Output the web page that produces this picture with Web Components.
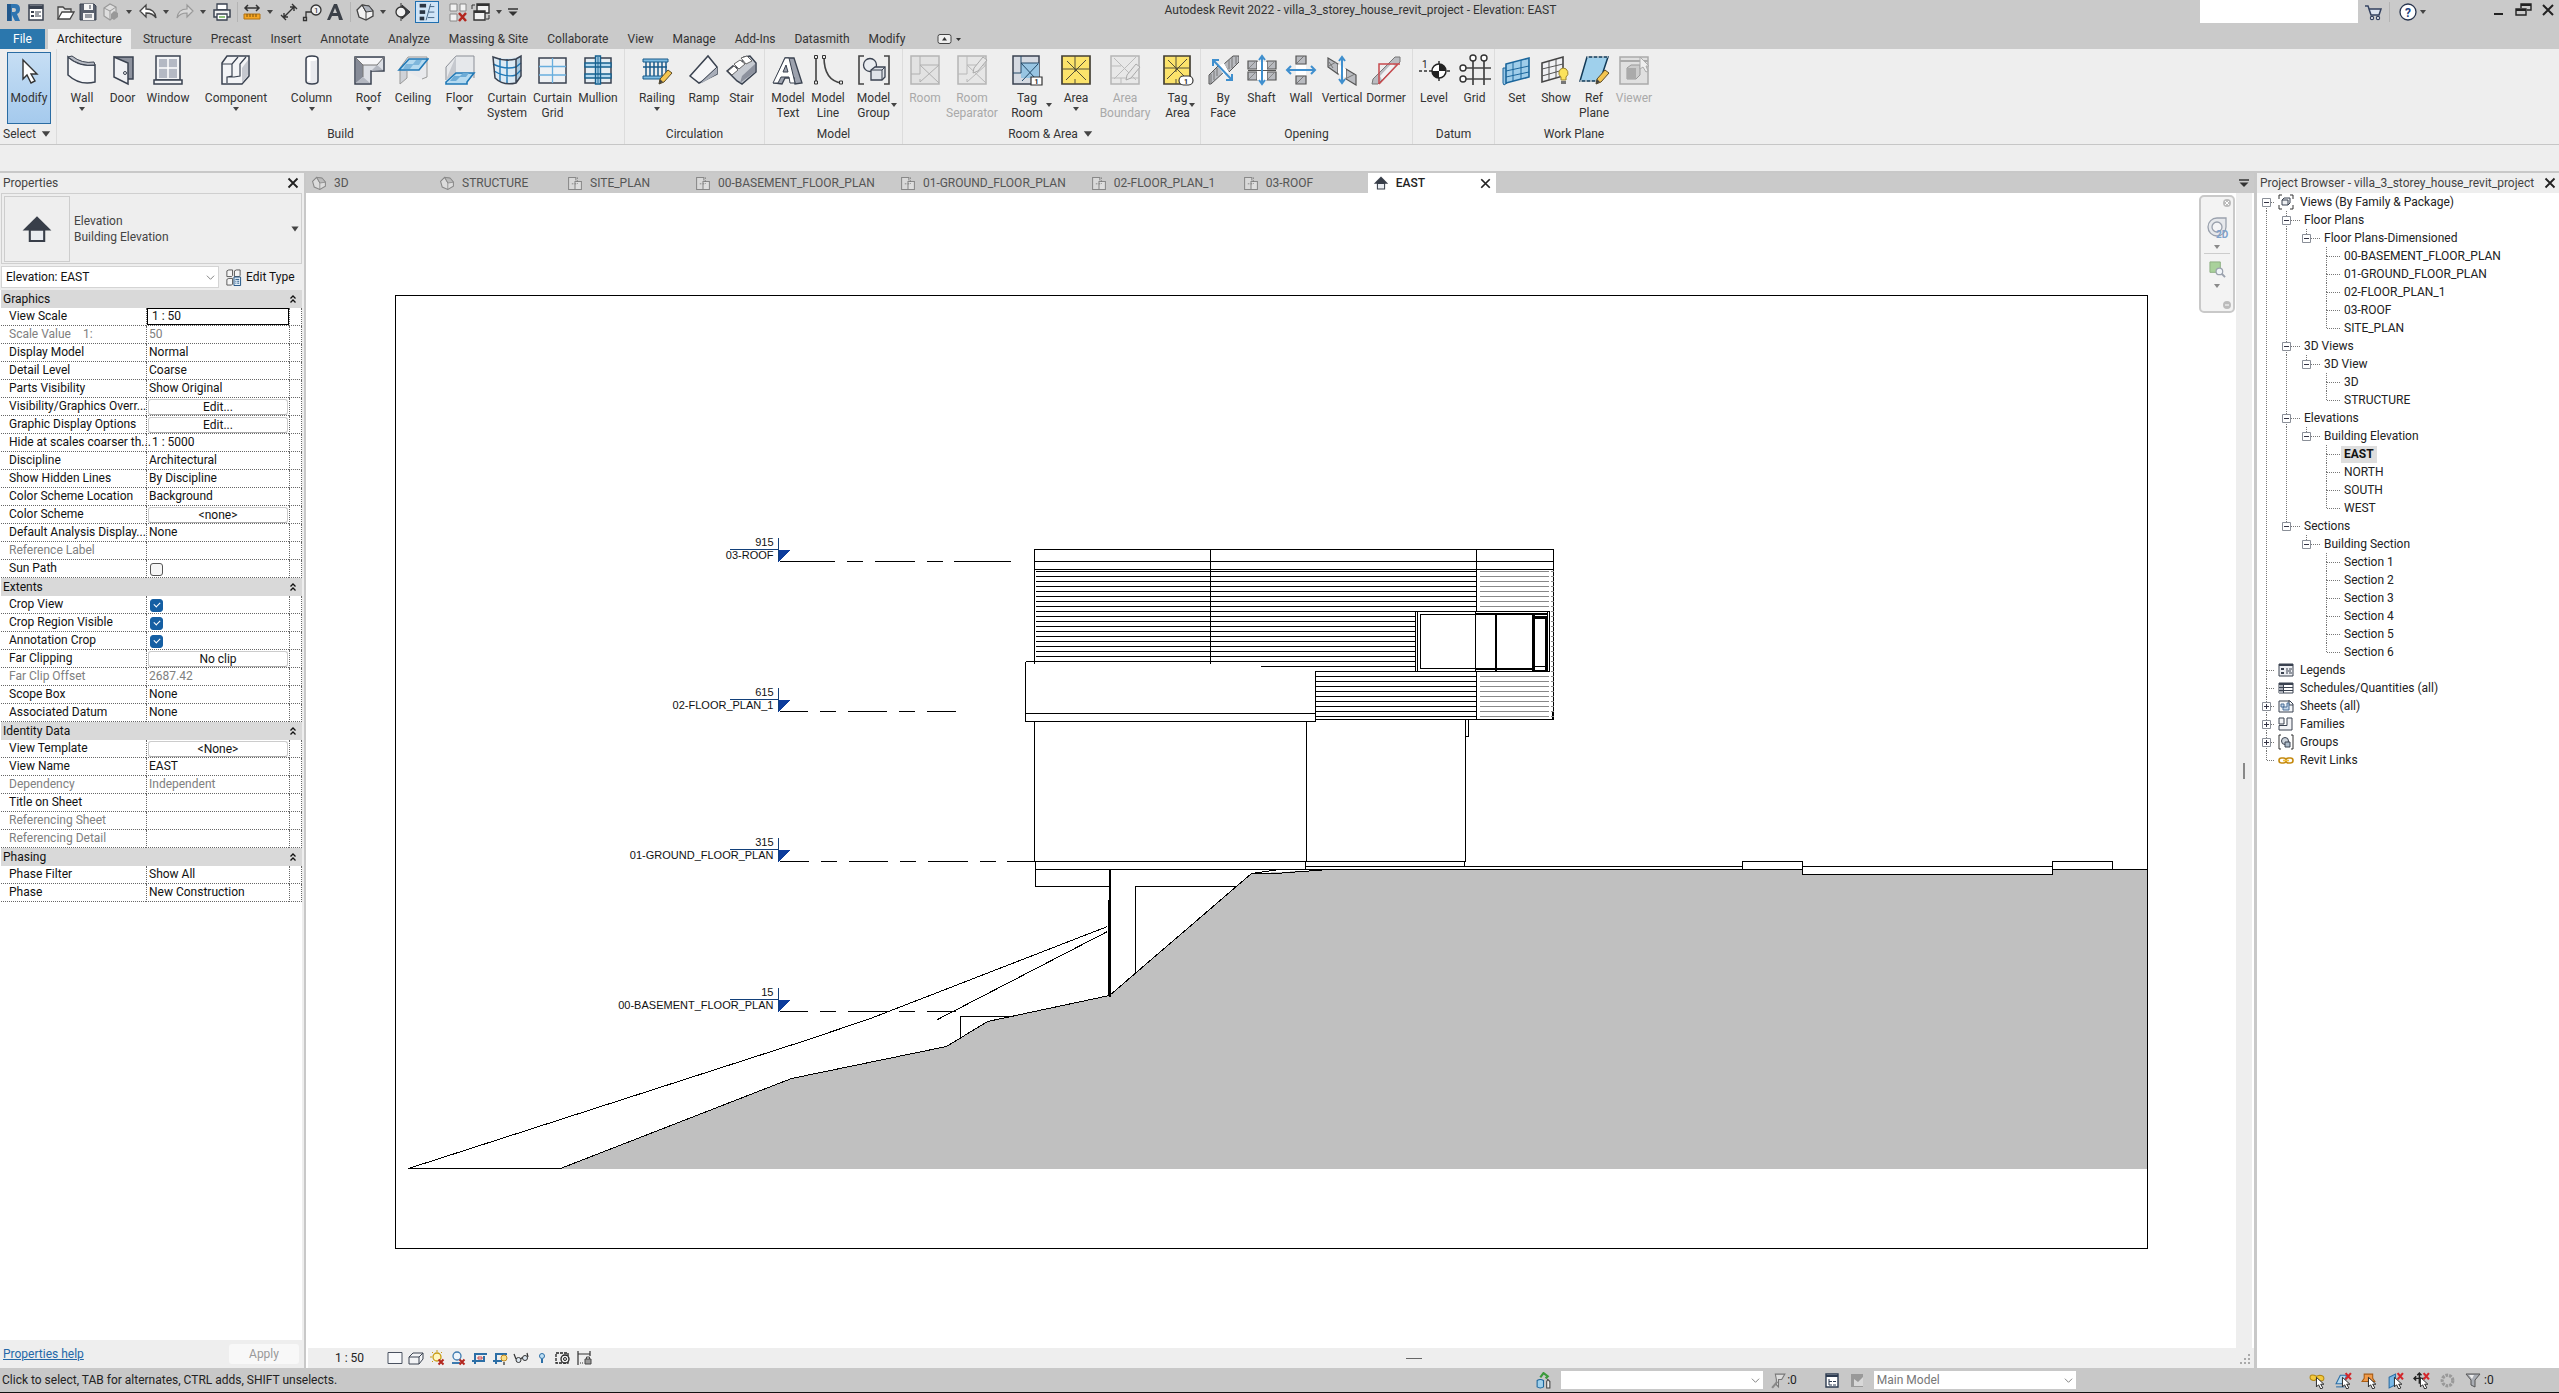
<!DOCTYPE html>
<html lang="en">
<head>
<meta charset="utf-8">
<title>Autodesk Revit 2022 - villa_3_storey_house_revit_project - Elevation: EAST</title>
<style>
  html, body { margin: 0; height: 100%; }
  body { font: 12px/16px Roboto, "Open Sans", sans-serif; color: #333; background: #eee; overflow: hidden; }
</style>
</head>
<body>
<rv-app></rv-app>
<script>
/* ---------- icon set ---------- */
const D = '#3a4250', L = '#e4e6ea', M = '#b9bdc6', B = '#1f78b6', LB = '#b5daf0';
const big = s => ['0 0 32 32', s];
const sm = s => ['0 0 20 20', s];
const mini = s => ['0 0 16 16', s];
const pencil = '<path d="M18 30l1-5 8-9 4 3-8 9z" fill="#f4c550" stroke="#5b4a25"/><path d="M18 30l1-5 3 3z" fill="#444"/>';
const greyPencil = '<path d="M17 19l1-5 9-11 4 3-9 11z" fill="#e6e6e6" stroke="#aaa"/>';
const cursor = '<path d="M7 5v9l2-2 2 4 2-1-2-3.500h3z" fill="#fff" stroke="#222" stroke-width=".9"/>';
const redx = '<path d="M9.500 9.500l5 5m0-5l-5 5" stroke="#b3261e" stroke-width="2"/>';
const rx2 = '<path d="M10 1l5 6m0-6l-5 6" stroke="#d3262b" stroke-width="2"/>';
const ICONS = {
  cursor: big('<path d="M10 6v19l4-4 4 8 4-2-4-7h6z" fill="#fff" stroke="#333" stroke-width="1.400"/>'),
  wall: big(`<path d="M2 3q11 10 27 8v17q-15 4-27-7z" fill="#f4f5f7" stroke="${D}" stroke-width="1.500"/><path d="M2 3l4-1q10 8 22 6l1 3Q14 13 2 3z" fill="${M}" stroke="${D}"/>`),
  door: big(`<path d="M7 3h19v22h-5" fill="#8d929e" stroke="${D}" stroke-width="1.500"/><path d="M7 3l14 6v21L7 23z" fill="#f0f1f4" stroke="${D}" stroke-width="1.500"/><circle cx="18" cy="19" r="1.500" fill="none" stroke="${D}"/>`),
  window: big(`<path d="M4 2h24v24H4z" fill="#f3f4f6" stroke="${D}" stroke-width="1.500"/><path d="M7 5h18v19H7z" fill="#b4b9c4"/><path d="M16 5v19M7 14h18" stroke="#fff" stroke-width="1.500"/><path d="M2 26h28v4H2z" fill="#f3f4f6" stroke="${D}" stroke-width="1.500"/>`),
  component: big(`<path d="M2 9l5-7h22v20l-7 8H2z" fill="#f3f4f6" stroke="${D}" stroke-width="1.500"/><path d="M22 29V14l6-8v15z" fill="#c5c8cf"/><path d="M18 3l-6 7v12l-5 1M26 3l-6 7v12l-6 1H7v6M2 10h10" fill="none" stroke="${D}" stroke-width="1.200"/>`),
  column: big(`<path d="M10 5q0-3 6-3t6 3v22q0 3-6 3t-6-3z" fill="#e9eaee" stroke="${D}" stroke-width="1.500"/><path d="M13 6v21" stroke="#fff" stroke-width="3"/><ellipse cx="16" cy="5" rx="5" ry="2" fill="#fff"/>`),
  roof: big(`<path d="M2 3h29v14H18v13H2z" fill="#dcdfe5" stroke="${D}" stroke-width="1.500"/><path d="M3 4l7 7v12L3 29z" fill="#868b97"/><path d="M10 11h14l6-7H3z" fill="#f6f6f8"/><path d="M3 29l7-6 7 6zM30 16l-6-5-6 6" fill="#b3b7c0"/><path d="M2 3l8 8h14l7-8M10 11v12" fill="none" stroke="#777"/>`),
  ceiling: big(`<path d="M3 14L11 3h19v20l-5 2" fill="#e8e9ec" stroke="#999"/><path d="M3 14v16l7-6V17" fill="#cfd2d7" stroke="#999"/><path d="M2 16L12 5h19l-9 11z" fill="${LB}" stroke="${B}" stroke-width="1.600"/><path d="M9 10h7l3-4h6l-3 5h-6l-3 4H6z" fill="#7fb7dc"/>`),
  floor: big(`<path d="M2 26V13L12 2h18v22" fill="#e6e8eb" stroke="#8b8f97"/><path d="M12 2v17L2 26z" fill="#c6c9cf"/><path d="M2 28l10-9h18l-7 9v2H2z" fill="${LB}" stroke="${B}" stroke-width="1.600"/><path d="M10 22h6l3-3h6l-3 4h-6l-4 4H6z" fill="#6cabd6"/>`),
  curtainsystem: big(`<path d="M2 3q12 3 28-1v20l-5 7Q12 32 4 24z" fill="#dceaf4"/><path d="M25 5l5-3v20l-5 7z" fill="#93bad6" opacity=".7"/><path d="M2 10q12 6 23 3l5-4M3 17q12 7 22 4l5-5M9 4v23M16 5v25" fill="none" stroke="${B}" stroke-width="1.400"/><path d="M2 3q12 5 23 2l5-3v20l-5 7Q12 32 4 24zM25 5v24" stroke="${D}" stroke-width="1.500" fill="none"/>`),
  curtaingrid: big(`<path d="M2 4h27v25H2z" fill="#eef1f4" stroke="${D}" stroke-width="1.500"/><path d="M15.500 4v25M2 12.500h27M2 21h27" stroke="#68aede" stroke-width="1.300"/>`),
  mullion: big(`<path d="M3 4h26v25H3z" fill="#e6edf2" stroke="${D}" stroke-width="1.500"/><path d="M3 9h26v4H3zM3 20h26v4H3zM13.500 2h5v28h-5z" fill="${LB}" stroke="#15608f" stroke-width="1.400"/><path d="M16 3v26" stroke="#15608f"/>`),
  railing: big(`<path d="M2 5h25v3H2zM2 22h21v3H2z" fill="#7cbbe2" stroke="#185a8a"/><path d="M5 8v14M9 8v14M13 8v14M17 8v14M21 8v14M25 8v12M2 13h24" stroke="#185a8a" stroke-width="1.500"/>${pencil}`),
  ramp: big(`<path d="M2 22L20 2l9 11v7L11 29z" fill="#f5f5f7" stroke="${D}" stroke-width="1.500"/><path d="M12 28l17-15v7L14 29z" fill="#a9aeb9"/><path d="M12 29L29 13" stroke="${D}"/>`),
  stair: big(`<path d="M1 17l6-5 4 2 1-6 5-1 1-4 6-1 6 7v9L16 30l-5-3z" fill="#c6cad1" stroke="${D}" stroke-width="1.500"/><path d="M2 17l6-5 4 4-6 5zM8 10l6-4 5 4-6 5zM15 4l6-2 5 5-6 3z" fill="#fff" stroke="#666"/><path d="M14 29l15-11v-8L16 22z" fill="#8d929e"/>`),
  modeltext: big(`<path d="M2 29L13 4h9l8 25-7 1-1-6h-9l-3 6z" fill="#9da2ae" stroke="${D}" stroke-width="1.300"/><path d="M1 29L13 4h4l6 25h-5l-1-6H9l-3 6zM11 18h5l-2-7z" fill="#fff" stroke="${D}" fill-rule="evenodd"/>`),
  modelline: big(`<path d="M4 3v26M12 3q0 24 18 26" fill="none" stroke="#444" stroke-width="1.600"/><path d="M2.500 1.500h3v3h-3zM2.500 27h3v3h-3zM10.500 1.500h3v3h-3zM27.500 27h3v3h-3z" fill="#eee" stroke="#333"/>`),
  modelgroup: big(`<path d="M6 2H1v28h5M26 2h5v28h-5" fill="none" stroke="#444" stroke-width="1.600"/><circle cx="12" cy="11" r="6.500" fill="#e9ecf0" stroke="${D}" stroke-width="1.300"/><path d="M13 16l4-3h10v10l-3 3H13z" fill="#dfe3e9" stroke="${D}" stroke-width="1.300"/><path d="M13 16h11v10M24 16l3-3" fill="none" stroke="${D}"/>`),
  room: big('<path d="M2 2h28v28H2z" fill="#e2e2e2" stroke="#b5b5b5" stroke-width="1.500"/><path d="M11 2v18H2M11 11h19M11 28V25M11 11l19 18M30 11L11 28" fill="none" stroke="#b0b0b0"/>'),
  roomsep: big(`<path d="M2 2h28v28H2z" fill="#e6e6e6" stroke="#b5b5b5" stroke-width="1.500"/><path d="M11 2v18H2M11 11h19M11 28V25M11 11l19 18M30 11L11 28" fill="none" stroke="#b8b8b8"/>${greyPencil}`),
  tagroom: big(`<path d="M2 2h26v28H2z" fill="#d5dae2" stroke="${D}" stroke-width="1.500"/><path d="M10 9h18v15H10z" fill="#98c5e2"/><path d="M10 2v17H2M10 9h18M10 9l14 15M27 10L11 27" fill="none" stroke="#244a68"/><path d="M20 23h11v8H20z" fill="#fff" stroke="#333" stroke-width="1.200"/><text x="23.500" y="29.500" font-size="7" font-weight="700" fill="#222">1</text>`),
  area: big('<path d="M2 2h28v28H2z" fill="#fce36b" stroke="#454136" stroke-width="1.700"/><path d="M7 7l19 19M26 6L6 26M15 2v16M2 15h28M15 25v5" stroke="#55503a" fill="none"/>'),
  areabound: big(`<path d="M2 2h28v28H2z" fill="#e8e8e8" stroke="#b5b5b5" stroke-width="1.500"/><path d="M5 4l22 22M27 3L5 25M2 12h10M2 24h28M12 24v6" stroke="#bbb" fill="none"/><g transform="translate(0 7)">${greyPencil}</g>`),
  tagarea: big('<path d="M2 2h26v28H2z" fill="#fce36b" stroke="#454136" stroke-width="1.700"/><path d="M6 6l18 18M25 5L5 25M14 2v16M2 14h26M14 25v5" stroke="#55503a" fill="none"/><rect x="17" y="22" width="14" height="9" rx="4.500" fill="#fff" stroke="#333" stroke-width="1.200"/><text x="22" y="29.500" font-size="7" font-weight="700" fill="#222">1</text>'),
  byface: big('<path d="M2 30V21l9-9 6 6L4 30zM17 10l9-8h6v6L22 18z" fill="#b9bbc0" stroke="#555"/><path d="M4 29V20M7 26V17M10 22v-8M22 15V6M25 14V3M29 10V3" stroke="#777"/><path d="M11 12l6-3 5 9-5 3z" fill="#fff"/><path d="M6 6l19 20M6 12V6h6M25 20v6h-6" fill="none" stroke="#3f8fce" stroke-width="2"/>'),
  shaft: big('<g fill="#b9bbc0" stroke="#555" stroke-width="1.200"><path d="M2 7h9v8H2zM21 7h9v8h-9zM2 18h9v8H2zM21 18h9v8h-9z"/></g><path d="M3 14l6-6M22 14l6-6M3 25l6-6M22 25l6-6" stroke="#888"/><path d="M11 8h10v18H11z" fill="#fff"/><path d="M2 16.500h28" stroke="#555"/><path d="M16 2v28M13 6l3-4 3 4M13 26l3 4 3-4" fill="none" stroke="#3f8fce" stroke-width="2"/>'),
  wallopen: big('<path d="M11 2h10v8H11zM11 22h10v8H11z" fill="#b9bbc0" stroke="#555" stroke-width="1.200"/><path d="M12 9l7-7M12 29l7-7" stroke="#777"/><path d="M11 11h10v10H11z" fill="#fff"/><path d="M2 16h28M6 12l-4 4 4 4M26 12l4 4-4 4" fill="none" stroke="#3f8fce" stroke-width="2"/>'),
  vertical: big('<path d="M2 4l10 6v10L2 13zM20 15l10 6v10l-10-6z" fill="#b9bbc0" stroke="#555" stroke-width="1.200"/><path d="M3 12l7-4M21 24l8-4M3 8l4 6" stroke="#777"/><path d="M12 10l8 5v9l-8-5z" fill="#fff"/><path d="M16 3v26M13 7l3-4 3 4M13 25l3 4 3-4" fill="none" stroke="#3f8fce" stroke-width="2"/>'),
  dormer: big('<path d="M3 25L25 3h5v5L8 30H2z" fill="#b9bbc0" stroke="#777"/><path d="M10 22l12-13 3 3-13 14z" fill="#fff" opacity=".8"/><path d="M9 30V10h21M9 30L28 10" fill="none" stroke="#c74a4e" stroke-width="1.500"/>'),
  level: big('<path d="M1 17h3m2 0h3m2 0h4M29 17h3M21 7v20" stroke="#333" stroke-width="1.500"/><circle cx="21" cy="17" r="7" fill="#fff" stroke="#222" stroke-width="1.500"/><path d="M21 17v-7a7 7 0 0 1 7 7zM21 17v7a7 7 0 0 1-7-7z" fill="#222"/><text x="4" y="14" font-size="10" fill="#222">1</text>'),
  grid: big('<path d="M14 7v24M25 7v24M6 14h26M6 25h26" stroke="#444" stroke-width="1.700"/><g fill="#fff" stroke="#333" stroke-width="1.400"><circle cx="14" cy="4" r="3"/><circle cx="25" cy="4" r="3"/><circle cx="4" cy="14" r="3"/><circle cx="4" cy="25" r="3"/></g>'),
  set: big('<path d="M2 14h4v15l-3 2-1-2z" fill="#9ac7e6" stroke="#1b669c"/><path d="M5 10l23-6v19L5 29z" fill="#9fcdea" stroke="#1b669c" stroke-width="1.600"/><path d="M12 8v19M20 6v19M5 17l23-5M5 23l23-5" stroke="#1b669c"/>'),
  show: big('<path d="M2 9l21-6v19L2 28z" fill="#f0f1f4" stroke="#444" stroke-width="1.600"/><path d="M9 7v19M16 5v19M2 15l21-5M2 22l21-6" stroke="#555"/><path d="M23 14a5 5 0 0 1 3 9v3h-5v-3a5 5 0 0 1 2-9z" fill="#fbe25b" stroke="#9a8332"/><path d="M21 27h5v3h-5z" fill="#777"/>'),
  refplane: big(`<path d="M9 3h21L22 27H2z" fill="#9fd0ec" stroke="#123a57" stroke-width="1.500"/><path d="M9 3h21M2 27h20" stroke="#fff" stroke-dasharray="2 3"/>${pencil}`),
  viewer: big('<path d="M2 3h28v27H2z" fill="#e0e0e0" stroke="#aaa" stroke-width="1.500"/><path d="M2 7h28" stroke="#aaa" stroke-width="2"/><path d="M9 14l4-3h9v10l-4 4H9z" fill="#ccc" stroke="#999"/><path d="M9 14h9v11H9z" fill="#aaa"/><path d="M22 3v12l3-2 3 5 2-1-2-5h3z" fill="#eee" stroke="#aaa"/>'),
  /* quick access */
  logo: sm('<path d="M4 2h8q5 0 5 5 0 4-3 5l3 7h-5l-3-6v6H4z" fill="#2f74b0"/><path d="M9 6h2q2 0 2 2t-2 2H9z" fill="#cacaca"/><path d="M4 2h4v17H4z" fill="#22588c"/>'),
  props: sm(`<path d="M3 3h14v15H3z" fill="#fff" stroke="${D}" stroke-width="1.500"/><path d="M3 4h14v3H3z" fill="${D}"/><path d="M5 9h3v2H5zM5 13h3v2H5z" fill="${D}"/><path d="M9 10h6M9 14h6M9 12h4" stroke="${D}"/>`),
  open: sm('<path d="M3 17V5h5l2 2h6v3" fill="#ededed" stroke="#444" stroke-width="1.300"/><path d="M3 17l4-7h12l-4 7z" fill="#fff" stroke="#444" stroke-width="1.300"/>'),
  save: sm(`<path d="M2 2h14l2 2v14H2z" fill="#59606d" stroke="${D}"/><path d="M6 2h9v6H6zM5 11h11v7H5z" fill="#f5f5f5"/><path d="M12 3v4M7 13h7M7 15h7" stroke="${D}"/>`),
  sync: sm('<path d="M3 6l6-4 6 3v8l-6 5-6-4z" fill="#dedede" stroke="#999" stroke-width="1.200"/><path d="M3 6l6 3v9M9 9l6-4" fill="none" stroke="#999"/><path d="M13 9l4 2v4l-4 3-3-2v-4z" fill="#999"/>'),
  undo: sm('<path d="M8 3v4q9 0 10 9-3-5-10-5v4L2 9z" fill="#fff" stroke="#444" stroke-width="1.300"/>'),
  redo: sm('<path d="M12 3v4Q3 7 2 16q3-5 10-5v4l6-6z" fill="#d8d8d8" stroke="#999" stroke-width="1.200"/>'),
  print: sm(`<path d="M5 2h10v6H5z" fill="#fff" stroke="${D}" stroke-width="1.300"/><path d="M2 8h16v7H2z" fill="#f0f0f0" stroke="${D}" stroke-width="1.500"/><path d="M5 12h10v6H5z" fill="#fff" stroke="${D}" stroke-width="1.300"/><path d="M7 14h6v2H7z" fill="#8fc27c"/>`),
  measure: sm('<path d="M3 6h14M6 3L3 6l3 3M14 3l3 3-3 3" fill="none" stroke="#333" stroke-width="1.500"/><path d="M2 12h16v5H2z" fill="#f5a623" stroke="#b27312"/><path d="M5 12v3M8 12v3M11 12v3M14 12v3" stroke="#7b4f0c"/>'),
  aligned: sm('<path d="M5 15L15 5M5 11v4h4M11 5h4v4M2 13l5 5M13 2l5 5" fill="none" stroke="#333" stroke-width="1.400"/>'),
  tag: sm('<path d="M1.500 15.500h3v3h-3zM4 15v-5h6" fill="none" stroke="#333" stroke-width="1.300"/><circle cx="14" cy="8" r="5" fill="#eee" stroke="#333" stroke-width="1.300"/><text x="12" y="11" font-size="8" fill="#222">1</text>'),
  bigA: sm('<path d="M2 18L9 2h3l6 16h-4l-1-4H7l-2 4zM8 11h4l-2-5z" fill="#3b4048" fill-rule="evenodd"/>'),
  house3d: sm('<path d="M2 8l5-5 7 1 4 5v5l-7 4-7-3z" fill="#f2f2f2" stroke="#444" stroke-width="1.300"/><path d="M7 3l7 1 4 5-7 1z" fill="#aeb3bc" stroke="#444"/><path d="M2 8l5-5 4 7v8" fill="none" stroke="#444"/>'),
  houseg: sm('<path d="M2 8l5-5 7 1 4 5v5l-7 4-7-3z" fill="#dcdcdc" stroke="#888" stroke-width="1.300"/><path d="M7 3l7 1 4 5-7 1z" fill="#bbb" stroke="#888"/><path d="M2 8l5-5 4 7v8" fill="none" stroke="#888"/>'),
  section: sm('<path d="M10 3l8 7-8 7z" fill="#3a3f48" stroke="#333"/><circle cx="9" cy="10" r="5" fill="#f2f2f2" stroke="#333" stroke-width="1.300"/><path d="M9 1v4M9 15v4" stroke="#333"/>'),
  thin: ['0 0 24 22', '<path d="M4 4h7" stroke="#2b3644" stroke-width="4"/><path d="M4 11h6" stroke="#2b3644" stroke-width="4"/><path d="M4 18h5" stroke="#2b3644" stroke-width="4"/><path d="M15 5h5M14 11h6M13 17h7" stroke="#3d5f80"/><path d="M16 2l-5 18" stroke="#3d5f80"/>'],
  closehid: sm('<path d="M2 2h7v7H2zM12 2h6v7h-6zM2 12h7v7H2z" fill="#f2f2f2" stroke="#888"/><path d="M11 11l7 8m0-8l-7 8" stroke="#b3261e" stroke-width="2.500"/>'),
  switchw: sm('<path d="M6 2h12v9H6z" fill="#f2f2f2" stroke="#333" stroke-width="1.400"/><path d="M3 9h11v9H3z" fill="#f2f2f2" stroke="#333" stroke-width="1.400"/><path d="M3 10h11M6 3h12" stroke="#333" stroke-width="2"/><path d="M1 7V3h3M18 13v4h-3" fill="none" stroke="#333"/>'),
  down: ['0 0 10 10', '<path d="M2 3h6L5 7z" fill="#444"/>'],
  menu: ['0 0 10 10', '<path d="M0 2h10" stroke="#333" stroke-width="1.500"/><path d="M0.500 4.500h9L5 9z" fill="#333"/>'],
  cart: sm('<path d="M2 4h3l3 9h8l2-6H6" fill="#dce3ee" stroke="#33415f" stroke-width="1.500"/><circle cx="9" cy="16" r="1.600" fill="#fff" stroke="#33415f" stroke-width="1.200"/><circle cx="15" cy="16" r="1.600" fill="#fff" stroke="#33415f" stroke-width="1.200"/>'),
  help: sm('<circle cx="10" cy="10" r="8" fill="#fff" stroke="#26334d" stroke-width="1.300"/><text x="7" y="14.500" font-size="12" font-weight="700" fill="#1d3f7f">?</text>'),
  min: sm('<path d="M6 14h9" stroke="#222" stroke-width="2"/>'),
  restore: sm('<path d="M8 8V4h10v6h-4" fill="none" stroke="#222" stroke-width="1.400"/><path d="M8 5h10" stroke="#222" stroke-width="2"/><path d="M3 9h10v6H3z" fill="none" stroke="#222" stroke-width="1.400"/><path d="M3 10h10" stroke="#222" stroke-width="2"/>'),
  close: sm('<path d="M5 5l10 10M15 5L5 15" stroke="#222" stroke-width="2"/>'),
  toggle: ['0 0 24 12', '<rect x="1" y="1.500" width="13" height="9" rx="2" fill="#eee" stroke="#444"/><path d="M5 7.500h5L7.500 4z" fill="#333"/><path d="M19 5h5l-2.500 3z" fill="#333"/>'],
  planTab: sm('<path d="M12 18H2V3h9v4" fill="#d9d9d9" stroke="#888" stroke-width="1.300"/><path d="M10 8h8v10h-8z" fill="#dedede" stroke="#888" stroke-width="1.300"/><path d="M6 11h7M13 3v8" stroke="#777" stroke-dasharray="2 1.500"/>'),
  elev: sm('<path d="M10 2l9 9H1z" fill="#383e49"/><path d="M5.500 10.500h9v7h-9z" fill="#e9ecf1" stroke="#383e49" stroke-width="1.300"/>'),
  edittype: ['0 0 18 18', `<path d="M2 2l2-1h4v6l-1 1H2zM10 2l2-1h4v6l-1 1h-5zM2 11l2-1h4v6l-1 1H2z" fill="#f4f4f4" stroke="#555"/><path d="M9.500 8.500h7v9h-7z" fill="#e4f0fa" stroke="#1c4f80"/><path d="M11 11h4M11 13h1m1 0h2M11 15h1m1 0h2" stroke="#1c4f80"/>`],
  collapse: ['0 0 8 10', '<path d="M1.500 4.500L4 2l2.500 2.500M1.500 8.500L4 6l2.500 2.500" fill="none" stroke="#111" stroke-width="1.300"/>'],
  chev: ['0 0 10 10', '<path d="M1 3l4 4 4-4" fill="none" stroke="#777"/>'],
  /* browser tree */
  views: mini(`<path d="M4 1H1v4M12 1h3v4M4 15H1v-4M12 15h3v-4" fill="none" stroke="#333"/><path d="M4 6l2-2h6v5l-2 2H4zM4 6h6v5" fill="#eef0f3" stroke="${D}"/>`),
  legends: mini(`<path d="M1 2h14v12H1z" fill="#eceef2" stroke="${D}"/><path d="M1 2h14v2H1z" fill="${D}"/><path d="M3 6h3v2H3zM3 10h3v2H3z" fill="${D}"/><path d="M8 7h2m1 0h3M8 9h5M8 11h2m1 0h3" stroke="${D}"/>`),
  schedules: mini(`<path d="M1 3h14v10H1z" fill="#fff" stroke="${D}"/><path d="M1 4h14" stroke="${D}" stroke-width="2"/><path d="M1 5h4v8H1z" fill="#a9adb6"/><path d="M1 7.500h14M1 10.500h14M5.500 4v9" stroke="${D}"/>`),
  sheets: mini(`<path d="M1 3h11l3 3v8H1z" fill="#f4f6f9" stroke="${D}"/><path d="M11 2v5h4" fill="none" stroke="${D}"/><path d="M3 6h3v3H3zM5 9h4V5h2v7H5z" fill="#c4d6ea" stroke="#4a6f98"/>`),
  families: mini(`<path d="M1 2h5v6H1zM1 9.500h8V2h5v12H1z" fill="#f1f2f5" stroke="${D}"/>`),
  groups: mini(`<path d="M3 1H1v14h2M13 1h2v14h-2" fill="none" stroke="#333"/><circle cx="7" cy="7" r="3.500" fill="#cdd4dc" stroke="${D}"/><path d="M7 8h5v5H7z" fill="#aebdcb" stroke="${D}"/>`),
  links: mini('<g fill="none" stroke="#c58a10" stroke-width="1.600"><rect x="1" y="6" width="7" height="5" rx="2.500"/><rect x="8" y="6" width="7" height="5" rx="2.500"/></g><path d="M5 8.500h6" stroke="#f0bf3d" stroke-width="1.600"/>'),
  /* view control bar */
  detail: mini('<path d="M1 2.500h14v11H1z" fill="#f7f8fa" stroke="#4a5260"/>'),
  style: mini('<path d="M1 7l4-4h10v6l-4 5H1zM1 7h10v7M11 7l4-4" fill="#f2f3f5" stroke="#3a4250"/>'),
  sun: mini(`<circle cx="8" cy="7" r="4" fill="#fff6bf" stroke="#c89b14" stroke-width="1.300"/><path d="M8 0v2M1 7h2M3 2l1 1M13 2l-1 1M3 12l1-1" stroke="#c89b14"/>${redx}`),
  shadow: mini(`<circle cx="7" cy="6" r="4" fill="#eef5fb" stroke="#3e7bb0" stroke-width="1.300"/><path d="M2 13h8" stroke="#3e7bb0" stroke-width="2"/>${redx}`),
  crop: mini('<path d="M1 11h12V6M4 14V4h12" fill="none" stroke="#2b6ea6" stroke-width="2"/><path d="M7 7h4v2H7z" fill="none" stroke="#c44"/>'),
  cropvis: mini('<path d="M1 11h9M4 14V4h11" fill="none" stroke="#2b6ea6" stroke-width="2"/><circle cx="12" cy="8" r="3" fill="#fbe08a" stroke="#c08a20"/><path d="M11 12h2v3h-2z" fill="#777"/>'),
  glasses: mini('<path d="M1 4l2 5M14 3l1 4M8 9q1-2 2-1" fill="none" stroke="#333" stroke-width="1.200"/><circle cx="5.500" cy="10" r="2.500" fill="#dbe6ef" stroke="#333"/><circle cx="12" cy="8" r="2.500" fill="#dbe6ef" stroke="#333"/>'),
  bulb: mini('<circle cx="8" cy="6" r="2.500" fill="#bfe0f5" stroke="#2b6ea6"/><path d="M7 9h2v4H7z" fill="#2b6ea6"/>'),
  tempview: mini('<path d="M1 3h12v10H1z" fill="none" stroke="#222" stroke-width="1.300" stroke-dasharray="3 1"/><circle cx="10" cy="9" r="4" fill="#f0f0f0" stroke="#222" stroke-width="1.300"/><circle cx="10" cy="9" r="1.500" fill="none" stroke="#222"/>'),
  constraints: mini('<path d="M2 1v14M14 1v5M2 4h12" fill="none" stroke="#333" stroke-width="1.200"/><path d="M4 13h4" stroke="#333" stroke-dasharray="1 1"/><path d="M9 9h6v5H9z" fill="#999" stroke="#444"/><path d="M10.500 9V7h3v2" fill="none" stroke="#444"/>'),
  grip: mini('<path d="M12 4h2v2h-2zM8 8h2v2H8zM12 8h2v2h-2zM4 12h2v2H4zM8 12h2v2H8zM12 12h2v2h-2z" fill="#aaa"/>'),
  /* status bar */
  worksets: mini('<path d="M2 8q3-2 6 0v6q-3 2-6 0z" fill="#9fd0ec" stroke="#1b669c"/><path d="M5 5l3-4 4 3-2 2" fill="none" stroke="#3a9a3a" stroke-width="2"/><path d="M12 7l2 2v6h-3V9z" fill="#eee" stroke="#444"/>'),
  editable: mini('<path d="M5 2h9l-3 5H8v7l-2-2V7z" fill="#ddd" stroke="#777"/><path d="M2 15l5-6" stroke="#888" stroke-width="2"/>'),
  options: mini('<path d="M2 2h12v13H2z" fill="#fff" stroke="#2d3b50" stroke-width="1.400"/><path d="M2 3h12v2H2z" fill="#2d3b50"/><path d="M5 7v6h3M5 9.500h3M9 9.500h3M9 13h3" stroke="#2d3b50" fill="none"/>'),
  addset: mini('<path d="M2 2h12v13H2z" fill="#999"/><path d="M5 14V7l4 3 5-5v9" fill="#d8d8d8"/>'),
  sellink: mini(`<path d="M1 5q0-3 4-2l2 1 3-1q4 0 4 3t-4 2L7 7 5 8Q1 8 1 5z" fill="#f3c93c" stroke="#b48812"/>${cursor}`),
  selunder: mini(`<path d="M1 11l4-8h6l-3 8z" fill="#b5daf0" stroke="#2b6ea6"/><path d="M1 14h8" stroke="#2b6ea6"/>${rx2}${cursor}`),
  selpin: mini(`<path d="M3 2h8v4l2 3H1l2-3z" fill="#f29b49" stroke="#a85b12"/>${cursor}`),
  selface: mini(`<path d="M2 5l6-3v10l-6 3z" fill="#79b8e6" stroke="#2b6ea6"/>${rx2}${cursor}`),
  seldrag: mini(`<path d="M6 1v10M1 6h10M4 3l2-2 2 2M3 4L1 6l2 2" fill="none" stroke="#222" stroke-width="1.400"/>${rx2}${cursor}`),
  ring: mini('<circle cx="8" cy="8" r="5" fill="none" stroke="#999" stroke-width="3" stroke-dasharray="2.500 1"/>'),
  filter: mini('<path d="M1 2h14l-5 6v7l-4-2V8z" fill="#a9adb4" stroke="#555"/><path d="M4 3h5L7 7z" fill="#eee"/>'),
  /* navigation bar */
  wheel: ['0 0 24 24', '<path d="M3 12a9 9 0 0 1 9-9h9v9a9 9 0 0 1-9 9 9 9 0 0 1-9-9z" fill="#e6e8ec" stroke="#9aa1ad" stroke-width="1.300"/><circle cx="12" cy="12" r="5" fill="#f4f4f6" stroke="#9aa1ad" stroke-width="1.300"/><text x="11" y="23" font-size="10" font-weight="700" fill="#7fa2cc">2D</text>'],
  zoomreg: ['0 0 18 18', '<path d="M1 1h11v11H1z" fill="#a9d19b" stroke="#8cae82"/><circle cx="11" cy="11" r="3.500" fill="#f0f4f8" stroke="#9aa1ad" stroke-width="1.300"/><path d="M13.500 13.500L17 17" stroke="#9aa1ad" stroke-width="2"/>'],
  xo: ['0 0 10 10', '<circle cx="5" cy="5" r="4" fill="#bbb"/><path d="M3 3l4 4M7 3L3 7" stroke="#fff"/>'],
  mo: ['0 0 10 10', '<circle cx="5" cy="5" r="4" fill="#bbb"/><path d="M3 5h4" stroke="#fff"/>'],
};

/* ---------- base class ---------- */
class Base extends HTMLElement {
  connectedCallback() {
    if (this.shadowRoot) return;
    this.attachShadow({ mode: 'open' }).innerHTML =
      `<style>*{box-sizing:border-box}button,input,select{font:inherit;color:inherit;margin:0}button{background:none;border:0;padding:0}${this.css()}</style>${this.html()}`;
  }
  css() { return ''; }
  html() { return '<slot></slot>'; }
}
const ic = (n, s, x = '') => `<rv-icon name="${n}" style="--s:${s}px" ${x}></rv-icon>`;

customElements.define('rv-icon', class extends Base {
  css() { return ':host{display:inline-block;width:var(--s,16px);flex:none;line-height:0}svg{display:block;width:100%;font-family:Roboto,sans-serif}'; }
  html() {
    const [vb, body] = ICONS[this.getAttribute('name')];
    return `<svg viewBox="${vb}" fill="none" aria-hidden="true">${body}</svg>`;
  }
});

/* ---------- title bar ---------- */
customElements.define('rv-titlebar', class extends Base {
  css() { return `:host{display:flex;height:29px;background:#cacaca;padding-left:3px}
    .qat{display:flex;align-items:center;height:24px}
    .qat button{display:flex;margin-right:3px}
    .qat .dd{margin-right:4px}
    .sp{margin-right:9px!important}
    .sep{width:1px;height:20px;background:#b4b4b4;margin:0 4px 0 2px}
    .on{background:#cfe4f7;border:1px solid #1f6fb0;height:22px;width:24px;align-items:center;margin-right:9px!important}
    h1{flex:1;margin:0;font:inherit;text-align:center;line-height:20px;white-space:nowrap}
    .acct{display:flex;width:359px;align-items:center;height:24px}
    input{width:158px;height:23px;border:0;background:#fff;align-self:flex-start;margin-right:5px;padding:0 4px}
    .win{margin-left:auto;display:flex;gap:5px;padding-right:1px}`; }
  html() {
    const b = (n, l, c = '') => `<button aria-label="${l}" class="${c}">${ic(n, 20)}</button>`;
    const d = '<button class="dd" aria-label="More">' + ic('down', 10) + '</button>';
    return `<div class="qat">${b('logo', 'Revit')}${b('props', 'Home', 'sp')}${b('open', 'Open')}${b('save', 'Save')}${b('sync', 'Synchronize')}${d}${b('undo', 'Undo')}${d}${b('redo', 'Redo')}${d}${b('print', 'Print')}<span class="sep"></span>${b('measure', 'Measure')}${d}${b('aligned', 'Aligned Dimension')}${b('tag', 'Tag')}${b('bigA', 'Text')}<span class="sep"></span>${b('house3d', '3D View')}${d}${b('section', 'Section')}<button class="on" aria-label="Thin Lines">${ic('thin', 22)}</button>${b('closehid', 'Close Inactive Views')}${b('switchw', 'Switch Windows')}${d}<button aria-label="Customize">${ic('menu', 10)}</button></div>
    <h1>Autodesk Revit 2022 - villa_3_storey_house_revit_project - Elevation: EAST</h1>
    <div class="acct"><input aria-label="Search">${ic('cart', 20)}<span class="sep" style="margin:0 8px 0 6px"></span>${ic('help', 20)}${ic('down', 10)}<div class="win">${b('min', 'Minimize')}${b('restore', 'Restore')}${b('close', 'Close')}</div></div>`;
  }
});

/* ---------- ribbon tabs ---------- */
customElements.define('rv-ribbon-tabs', class extends Base {
  css() { return `:host{display:block;background:#cacaca;height:20px}
    nav{display:flex;height:20px;align-items:center}
    a{color:#333;text-decoration:none;padding:0 9px 0 10px;line-height:20px;white-space:nowrap}
    .file{background:#2b77ad;color:#fff;padding:0 13px;margin-right:3px}
    .on{background:#eee;color:#111;padding:0 9px;margin-right:2px}
    button{display:flex;margin-left:23px}`; }
  html() {
    return `<nav><a href="#" class="file">File</a><a href="#" class="on">Architecture</a>${['Structure', 'Precast', 'Insert', 'Annotate', 'Analyze', 'Massing &amp; Site', 'Collaborate', 'View', 'Manage', 'Add-Ins', 'Datasmith', 'Modify'].map(t => `<a href="#">${t}</a>`).join('')}<button aria-label="Minimize ribbon">${ic('toggle', 24)}</button></nav>`;
  }
});

/* ---------- ribbon ---------- */
customElements.define('rv-tool', class extends Base {
  css() {
    return `:host{display:block;width:var(--w);position:relative;flex:none}
    button{display:flex;flex-direction:column;align-items:center;width:100%;padding-top:5px}
    .t{line-height:15px;white-space:pre;text-align:center;margin-top:5px}
    .b{margin-top:-2px}
    .r{position:absolute;right:3px;top:51px}
    :host([off]) .t{color:#a9a9a9}
    :host([active]) button{background:linear-gradient(#c6def4,#a5caed);border:1px solid #2a6ca3;height:72px;padding-top:1px;margin-top:3px}`; }
  html() {
    const a = this.getAttribute('arrow');
    return `<button ${this.hasAttribute('off') ? 'disabled' : ''}>${ic(this.getAttribute('icon'), 32)}<span class="t">${this.getAttribute('label').replace('|', '\n')}</span>${a ? ic('down', 10, `class="${a}"`) : ''}</button>`;
  }
});
customElements.define('rv-panel', class extends Base {
  css() { return `:host{display:flex;flex-direction:column;border-right:1px solid #dcdcdc;height:95px}
    .row{display:flex;flex:1}
    .cap{display:flex;justify-content:center;align-items:center;gap:3px;line-height:16px;padding-bottom:2px}`; }
  html() { return `<div class="row"><slot></slot></div><div class="cap">${this.getAttribute('caption')}${this.hasAttribute('menu') ? ic('down', 14) : ''}</div>`; }
});
const PANELS = [
  ['Build', '', [['wall', 'Wall', 50, 'b'], ['door', 'Door', 31], ['window', 'Window', 60], ['component', 'Component', 76, 'b'], ['column', 'Column', 75, 'b'], ['roof', 'Roof', 39, 'b'], ['ceiling', 'Ceiling', 50], ['floor', 'Floor', 43, 'b'], ['curtainsystem', 'Curtain|System', 52], ['curtaingrid', 'Curtain|Grid', 39], ['mullion', 'Mullion', 52]]],
  ['Circulation', '', [['railing', 'Railing', 64, 'b'], ['ramp', 'Ramp', 30], ['stair', 'Stair', 45]]],
  ['Model', '', [['modeltext', 'Model|Text', 46], ['modelline', 'Model|Line', 34], ['modelgroup', 'Model|Group', 57, 'r']]],
  ['Room &amp; Area', 'menu', [['room', 'Room', 44, '', 1], ['roomsep', 'Room|Separator', 50, '', 1], ['tagroom', 'Tag|Room', 60, 'r'], ['area', 'Area', 38, 'b'], ['areabound', 'Area|Boundary', 60, '', 1], ['tagarea', 'Tag|Area', 45, 'r']]],
  ['Opening', '', [['byface', 'By|Face', 44], ['shaft', 'Shaft', 33], ['wallopen', 'Wall', 46], ['vertical', 'Vertical', 36], ['dormer', 'Dormer', 52]]],
  ['Datum', '', [['level', 'Level', 42], ['grid', 'Grid', 39]]],
  ['Work Plane', '', [['set', 'Set', 44], ['show', 'Show', 34], ['refplane', 'Ref|Plane', 42], ['viewer', 'Viewer', 38, '', 1]]],
];
customElements.define('rv-ribbon', class extends Base {
  css() { return `:host{display:flex;height:96px;background:#eee;border-bottom:1px solid #c6c6c6}
    rv-panel:last-of-type{border-right:0}`; }
  html() {
    return `<rv-panel caption="Select" menu><rv-tool icon="cursor" label="Modify" active style="--w:44px;margin:0 5px 0 7px"></rv-tool></rv-panel>` +
      PANELS.map(([c, m, ts]) => `<rv-panel caption="${c}" ${m}>${ts.map(([i, l, w, a, off]) => `<rv-tool icon="${i}" label="${l}" style="--w:${w}px" ${a ? `arrow="${a}"` : ''} ${off ? 'off' : ''}></rv-tool>`).join('')}</rv-panel>`).join('');
  }
});

/* ---------- properties palette ---------- */
const PROPS = [
  ['Graphics', [['View Scale', 'input', '1 : 50'], ['Scale Value &nbsp;&nbsp; 1:', 'off', '50'], ['Display Model', '', 'Normal'], ['Detail Level', '', 'Coarse'], ['Parts Visibility', '', 'Show Original'], ['Visibility/Graphics Overr...', 'btn', 'Edit...'], ['Graphic Display Options', 'btn', 'Edit...'], ['Hide at scales coarser th...', 'pad', '1 : 5000'], ['Discipline', '', 'Architectural'], ['Show Hidden Lines', '', 'By Discipline'], ['Color Scheme Location', '', 'Background'], ['Color Scheme', 'btn', '&lt;none&gt;'], ['Default Analysis Display...', '', 'None'], ['Reference Label', 'off', ''], ['Sun Path', 'chk', 0]]],
  ['Extents', [['Crop View', 'chk', 1], ['Crop Region Visible', 'chk', 1], ['Annotation Crop', 'chk', 1], ['Far Clipping', 'btn', 'No clip'], ['Far Clip Offset', 'off', '2687.42'], ['Scope Box', '', 'None'], ['Associated Datum', '', 'None']]],
  ['Identity Data', [['View Template', 'btn', '&lt;None&gt;'], ['View Name', '', 'EAST'], ['Dependency', 'off', 'Independent'], ['Title on Sheet', '', ''], ['Referencing Sheet', 'off', ''], ['Referencing Detail', 'off', '']]],
  ['Phasing', [['Phase Filter', '', 'Show All'], ['Phase', '', 'New Construction']]],
];
customElements.define('rv-properties', class extends Base {
  css() { return `:host{display:flex;flex-direction:column;background:#eee;border-right:2px solid #c8c8c8;padding-right:2px;color:#111}
    header{display:flex;height:20px;align-items:center;justify-content:space-between;padding:0 0 0 3px;color:#444}
    header button{display:flex}
    .type{display:flex;align-items:center;height:71px;border:1px solid #cfcfcf;margin-left:1px;color:#444}
    .thumb{width:66px;height:66px;border:1px solid #cdcdcd;margin:0 4px 0 2px;display:grid;place-items:center}
    .type p{margin:0;flex:1}
    .inst{display:flex;height:26px;align-items:center;gap:6px;padding-left:1px}
    .sel{position:relative;width:218px}
    .sel rv-icon{position:absolute;right:4px;top:7px}
    select{appearance:none;width:100%;height:22px;border:1px solid #d4d4d4;background:#fff;padding:0 4px;border-radius:0}
    .inst button{display:flex;align-items:center;gap:4px}
    .grid{flex:1;background:#fff;padding-left:1px}
    table{border-collapse:separate;border-spacing:0;width:100%;table-layout:fixed}
    td,th{height:18px;padding:0;font-weight:400;text-align:left;line-height:17px;white-space:nowrap;border-bottom:1px dotted #666}
    tr.h th{background:#d9d9d9;border:0;padding-left:2px}
    tr.h th:last-child{padding:0}
    tr.h rv-icon{display:block}
    tr.p th{padding-left:8px} tr.p td{border-left:1px dotted #666;padding-left:2px}
    tr.p td:last-child{border-right:1px dotted #666}
    tr.off{color:#808080}
    td.pad{padding-left:5px!important}
    td.i,td.bt{padding:0 0 0 1px!important}
    td button{display:block;width:140px;height:16px;line-height:14px;background:#fff;border:1px solid #ccc;border-bottom-color:#aaa;border-radius:3px;text-align:center}
    td input[type=text]{display:block;width:142px;height:17px;border:1px solid #000;padding:0 4px;margin-left:-1px;background:#fff}
    input[type=checkbox]{appearance:none;display:block;width:13px;height:13px;border:1px solid #555;border-radius:3px;background:#f6f6f6;margin-left:1px;margin-top:2px}
    input:checked{background:#155fa3;border-color:#155fa3;position:relative}
    input:checked::after{content:"";position:absolute;left:3px;top:2px;width:5px;height:3px;border-left:1px solid #fff;border-bottom:1px solid #fff;transform:rotate(-45deg)}
    footer{display:flex;height:28px;align-items:center;justify-content:space-between;padding:0 3px}
    footer a{color:#2468a8}
    footer button{width:70px;height:20px;background:#f8f8f8;border-radius:3px;color:#999}`; }
  html() {
    let n = 0;
    const row = ([l, k, v]) => {
      const id = 'f' + n++;
      const lab = k === 'chk' || k === 'input' ? `<label for="${id}">${l}</label>` : l;
      const cell = k === 'chk' ? `<td><input type="checkbox" id="${id}" ${v ? 'checked' : ''}></td>`
        : k === 'input' ? `<td class="i"><input type="text" id="${id}" value="${v}"></td>`
        : k === 'btn' ? `<td class="bt"><button>${v}</button></td>` : `<td class="${k}">${v}</td>`;
      return `<tr class="p ${k === 'off' ? 'off' : ''}"><th scope="row">${lab}</th>${cell}<td></td></tr>`;
    };
    return `<header><span>Properties</span><button aria-label="Close">${ic('close', 18)}</button></header>
    <div class="type"><div class="thumb">${ic('elev', 32)}</div><p>Elevation<br>Building Elevation</p>${ic('down', 12)}</div>
    <div class="inst"><div class="sel"><select aria-label="Instance"><option>Elevation: EAST</option></select>${ic('chev', 9)}</div><button>${ic('edittype', 17)}Edit Type</button></div>
    <div class="grid"><table><colgroup><col style="width:145px"><col style="width:143px"><col></colgroup>
    ${PROPS.map(([g, rs]) => `<tr class="h"><th colspan="2">${g}</th><th>${ic('collapse', 8)}</th></tr>${rs.map(row).join('')}`).join('')}</table></div>
    <footer><a href="#">Properties help</a><button disabled>Apply</button></footer>`;
  }
});

/* ---------- project browser ---------- */
const TREE = [
  [0, '-', 'Views (By Family &amp; Package)', 'views'], [1, '-', 'Floor Plans'], [2, '-', 'Floor Plans-Dimensioned'],
  [3, '', '00-BASEMENT_FLOOR_PLAN'], [3, '', '01-GROUND_FLOOR_PLAN'], [3, '', '02-FLOOR_PLAN_1'], [3, '', '03-ROOF'], [3, '', 'SITE_PLAN'],
  [1, '-', '3D Views'], [2, '-', '3D View'], [3, '', '3D'], [3, '', 'STRUCTURE'],
  [1, '-', 'Elevations'], [2, '-', 'Building Elevation'], [3, '', 'EAST', '', 1], [3, '', 'NORTH'], [3, '', 'SOUTH'], [3, '', 'WEST'],
  [1, '-', 'Sections'], [2, '-', 'Building Section'], [3, '', 'Section 1'], [3, '', 'Section 2'], [3, '', 'Section 3'], [3, '', 'Section 4'], [3, '', 'Section 5'], [3, '', 'Section 6'],
  [0, '', 'Legends', 'legends'], [0, '', 'Schedules/Quantities (all)', 'schedules'], [0, '+', 'Sheets (all)', 'sheets'], [0, '+', 'Families', 'families'], [0, '+', 'Groups', 'groups'], [0, '', 'Revit Links', 'links'],
];
customElements.define('rv-browser', class extends Base {
  css() { return `:host{display:flex;flex-direction:column;background:#fff;border-left:3px solid #c8c8c8;color:#222}
    header{display:flex;height:20px;align-items:center;justify-content:space-between;background:#eee;padding-left:3px;color:#444;white-space:nowrap}
    header button{display:flex}
    ul{list-style:none;margin:0;padding:0}
    li{display:flex;height:18px;align-items:center;white-space:nowrap}
    svg{flex:none;display:block}
    .ic{margin:0 6px 0 1px}
    .on{background:#dedede;font-weight:700;color:#111;line-height:17px;margin-left:-3px;padding:0 3px}`; }
  html() {
    const more = (i, lv) => { for (let k = i + 1; k < TREE.length; k++) { if (TREE[k][0] < lv) return false; if (TREE[k][0] === lv) return true; } return false; };
    const dot = 'stroke="#777" stroke-dasharray="1 1"';
    const rows = TREE.map(([lv, box, label, icon, on], i) => {
      let g = '';
      for (let j = 0; j < lv; j++) g += `<svg width="20" height="18">${more(i, j) ? `<path d="M9.500 0v18" ${dot}/>` : ''}</svg>`;
      const w = lv ? 27 : 20;
      g += `<svg width="${w}" height="18" fill="none"><path d="${i ? 'M9.500 0v9' : ''}${more(i, lv) ? 'M9.500 9v9' : ''}M10 9.500h${w - 13}" ${dot}/>${box ? `<path d="M5.500 5.500h8v8h-8z" fill="#fff" stroke="#8a8f98"/><path d="M7 9.500h5${box === '+' ? 'M9.500 7v5' : ''}" stroke="#334"/>` : ''}</svg>`;
      return `<li>${g}${icon ? ic(icon, 16, 'class="ic"') : ''}<span class="${on ? 'on' : ''}">${label}</span></li>`;
    }).join('');
    return `<header><span>Project Browser - villa_3_storey_house_revit_project</span><button aria-label="Close">${ic('close', 18)}</button></header><ul>${rows}</ul>`;
  }
});

/* ---------- document tabs ---------- */
customElements.define('rv-doc-tabs', class extends Base {
  css() { return `:host{display:flex;height:20px;background:#cacaca;color:#555}
    .tab{display:flex;align-items:center;min-width:128px;padding:0 20px 0 5px;gap:7px;white-space:nowrap;height:20px}
    .tab.on{background:#fff;color:#222;font-weight:500;padding-right:2px}
    .tab.on button{margin-left:auto;display:flex}
    .m{margin:0 5px 0 auto;display:flex;align-items:center}`; }
  html() {
    const t = [['houseg', '3D'], ['houseg', 'STRUCTURE'], ['planTab', 'SITE_PLAN'], ['planTab', '00-BASEMENT_FLOOR_PLAN'], ['planTab', '01-GROUND_FLOOR_PLAN'], ['planTab', '02-FLOOR_PLAN_1'], ['planTab', '03-ROOF']];
    const wide = { '02-FLOOR_PLAN_1': 152, '03-ROOF': 130 };
    return t.map(([i, l]) => `<div class="tab" ${wide[l] ? `style="min-width:${wide[l]}px"` : ''}>${ic(i, 16)}<span>${l}</span></div>`).join('') +
      `<div class="tab on">${ic('elev', 16)}<span>EAST</span><button aria-label="Close view">${ic('close', 17)}</button></div><button class="m" aria-label="Tab list">${ic('menu', 10)}</button>`;
  }
});

/* ---------- drawing ---------- */
customElements.define('rv-elevation', class extends Base {
  css() { return `:host{display:block;background:#fff;overflow:hidden;min-width:0}
    svg{display:block;width:100%;height:100%}
    text{font:11px "Liberation Sans",Arial,sans-serif;fill:#111;text-anchor:end}`; }
  html() {
    let dark = '', grey = '';
    for (let y = 571; y <= 716; y += 5) {
      const x0 = y <= 661 ? 1035 : y === 666 ? 1260 : 1315;
      const x1 = y > 611 && y < 671 ? 1415 : 1476;
      dark += `M${x0} ${y}H${x1}`;
      grey += y > 610 && y < 672 ? `M1550 ${y}h3` : `M1479 ${y}h69m2 0h3`;
    }
    const dashes = { 561: [[779, 834], [846, 862], [874, 914], [926, 942], [953, 1010]], 711: [[779, 807], [819, 835], [847, 886], [898, 914], [926, 955]], 861: [[779, 808], [820, 836], [848, 887], [899, 915], [927, 967], [979, 995], [1006, 1035]], 1011: [[779, 807], [819, 835], [847, 886], [898, 914], [926, 955]] };
    let dd = '';
    for (const y in dashes) for (const [a, b] of dashes[y]) dd += `M${a} ${y}H${b}`;
    const levels = [[549, '915', '03-ROOF'], [699, '615', '02-FLOOR_PLAN_1'], [849, '315', '01-GROUND_FLOOR_PLAN'], [999, '15', '00-BASEMENT_FLOOR_PLAN']].map(([y, n, t]) =>
      `<path d="M729 ${y}H778M778 ${y - 12}v24" stroke="#12407a"/><path d="M778 ${y}h13l-13 12z" fill="#0c3c9c"/><text x="773" y="${y - 4}">${n}</text><text x="773" y="${y + 9}">${t}</text>`).join('');
    return `<svg viewBox="306 193 1930 1155" preserveAspectRatio="xMinYMin meet" role="img" aria-label="East elevation"><g transform="translate(.5 .5)" fill="none" stroke="none" shape-rendering="crispEdges">
      <path d="M560 1168L791 1078 946 1046 987 1021 1109 995 1251 873 1328 869H1802V874H2052V869H2147V1168z" fill="#c0c0c0"/>
      <g stroke="#000">
        <path d="M395 295H2147V1248H395z"/>
        <path d="M408 1168H560L791 1078 946 1046 987 1021 1109 995 1251 873"/>
        <path d="M408 1168L805 1040 870 1018 1107 926M1107 931L937 1019M960 1037V1016H1013"/>
        <path d="M1251 873L1279 869M1251 873H1275L1328 869"/>
        <path d="M1035 861V886H1109M1035 861H1465V719M1035 869H1802M2052 869H2147M1305 861V869M1305 866H1742M1464 861V866"/>
        <path d="M1742 869V861H1802V874H2052V861H2112V869M1802 866H2052"/>
        <path d="M1135 972V886H1236M1108 899V995"/>
        <path d="M1109.500 869V996" stroke-width="2"/>
        <path d="M1034 663V549H1553V719H1315M1034 561H1553M1034 569H1553M1210 549V663M1476 549V611M1476 671V719"/>
        <path d="M1552 711V719M1025 661H1035M1025 661V721H1315M1025 713H1315M1315 670V721M1034 721V861M1306 721V861M1465 736H1468V719"/>
        <path d="${dark}"/>
        <path d="${dd}"/>
      </g>
      <path d="${grey}" stroke="#888"/>
      <path d="M1415 611H1549V671H1415z" fill="#fff" stroke="#000"/>
      <path d="M1417 611V671M1420 614H1475V668H1420zM1475 611V671M1547 611V671" stroke="#000"/>
      <path d="M1475 613.500H1547M1475 668.500H1533M1495.500 612V671" stroke="#000" stroke-width="2"/>
      <path d="M1532.500 614V670M1546 616V670M1533 617H1547" stroke="#000" stroke-width="3"/>
      <path d="M1533 666H1545M1533 670H1545" stroke="#000"/>
      ${levels}</g></svg>`;
  }
});
customElements.define('rv-navbar', class extends Base {
  css() { return `:host{display:flex;flex-direction:column;align-items:center;width:36px;height:118px;border:2px solid #c9c9c9;border-radius:5px;background:#f3f3f3}
    .x{align-self:flex-end;margin:1px 1px 0 0}
    button{display:flex}
    .a{margin-top:7px}
    hr{width:26px;border:0;border-top:1px solid #ccc;margin:1px 0 7px}
    .d{opacity:.6;margin-top:3px}
    .z{margin:auto 1px 1px 0;align-self:flex-end}`; }
  html() { return `${ic('xo', 10, 'class="x"')}<button class="a" aria-label="Steering wheel">${ic('wheel', 24)}</button>${ic('down', 10, 'class="d"')}<hr><button aria-label="Zoom region">${ic('zoomreg', 17)}</button>${ic('down', 10, 'class="d"')}${ic('mo', 10, 'class="z"')}`; }
});
customElements.define('rv-viewbar', class extends Base {
  css() { return `:host{display:flex;height:20px;background:#eee;align-items:center;padding-left:27px;color:#222;border-left:2px solid #fff}
    .i{display:flex;gap:5px;margin-left:23px}
    .h{width:16px;height:1px;background:#666;margin:0 auto}
    button{display:flex}
    .g{margin-right:2px}`; }
  html() { return `<button>1 : 50</button><div class="i">${['detail', 'style', 'sun', 'shadow', 'crop', 'cropvis', 'glasses', 'bulb', 'tempview', 'constraints'].map(i => `<button aria-label="${i}">${ic(i, 16)}</button>`).join('')}</div><span class="h"></span>${ic('grip', 16, 'class="g"')}`; }
});
customElements.define('rv-document', class extends Base {
  css() { return `:host{display:flex;flex-direction:column;min-width:0}
    .mid{display:flex;flex:1;min-height:0;position:relative}
    rv-elevation{flex:1}
    .scroll{width:18px;background:#eee;border-right:2px solid #fff;display:grid;place-items:center}
    .scroll i{width:2px;height:16px;background:#888}
    rv-navbar{position:absolute;right:19px;top:2px}`; }
  html() { return `<rv-doc-tabs></rv-doc-tabs><div class="mid"><rv-elevation></rv-elevation><div class="scroll"><i></i></div><rv-navbar></rv-navbar></div><rv-viewbar></rv-viewbar>`; }
});

/* ---------- status bar ---------- */
customElements.define('rv-status', class extends Base {
  css() { return `:host{display:flex;height:25px;background:#c8c8c8;border-bottom:1px solid #111;align-items:center;padding-left:2px;color:#222}
    .msg{flex:1 1 0}
    .mid{display:flex;align-items:center;width:548px}
    .sel{position:relative;width:204px;margin:0 7px 0 9px}
    .sel rv-icon{position:absolute;right:3px;top:5px}
    select{appearance:none;width:100%;height:18px;border:0;border-radius:0;background:#fff;color:#777;padding:0 3px}
    .o{margin:0 9px 0 27px}
    .tail{flex:none;display:flex;align-items:center;gap:9px;margin-left:226px;width:250px}
    .tail .f{display:flex;align-items:center;gap:3px}
    button{display:flex}`; }
  html() { return `<span class="msg">Click to select, TAB for alternates, CTRL adds, SHIFT unselects.</span>
    <div class="mid">${ic('worksets', 17)}<div class="sel"><select aria-label="Active workset"><option></option></select>${ic('chev', 9)}</div>${ic('editable', 17)}<span>:0</span>${ic('options', 16, 'class="o"')}${ic('addset', 16)}<div class="sel"><select aria-label="Design option"><option>Main Model</option></select>${ic('chev', 9)}</div></div>
    <div class="tail">${['sellink', 'selunder', 'selpin', 'selface', 'seldrag', 'ring'].map(i => `<button aria-label="${i}">${ic(i, 17)}</button>`).join('')}<span class="f">${ic('filter', 16)}:0</span></div>`; }
});

/* ---------- application shell ---------- */
customElements.define('rv-app', class extends Base {
  css() { return `:host{display:flex;flex-direction:column;height:100vh}
    .opts{height:26px;background:#eee;flex:none}
    main{flex:1;display:flex;min-height:0;border-top:2px solid #c8c8c8}
    rv-properties{flex:0 0 306px} rv-document{flex:1} rv-browser{flex:0 0 305px}
    rv-titlebar,rv-ribbon-tabs,rv-ribbon,rv-status{flex:none;box-sizing:border-box}
    rv-properties,rv-browser{box-sizing:border-box}`; }
  html() { return `<rv-titlebar></rv-titlebar><rv-ribbon-tabs></rv-ribbon-tabs><rv-ribbon></rv-ribbon><div class="opts"></div><main><rv-properties></rv-properties><rv-document></rv-document><rv-browser></rv-browser></main><rv-status></rv-status>`; }
});
</script>
</body>
</html>
